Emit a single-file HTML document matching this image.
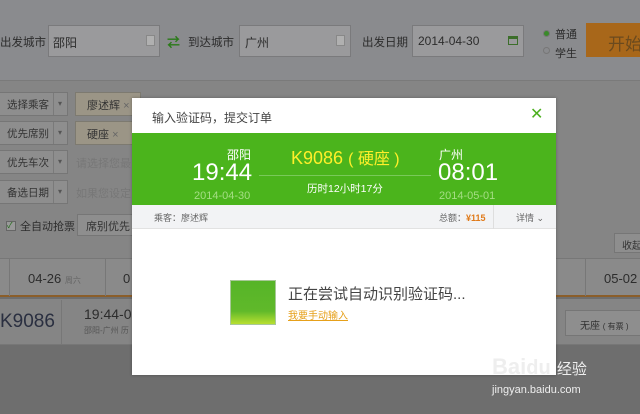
<!DOCTYPE html>
<html><head><meta charset="utf-8"><style>
*{margin:0;padding:0;box-sizing:border-box}
body{width:640px;height:414px;overflow:hidden;background:#6e6e6e;font-family:"Liberation Sans","Noto Sans CJK SC",sans-serif;position:relative;color:#333}
.a{position:absolute;white-space:nowrap}
.t{font-size:12px;color:#2c2c2c}
.inp{background:#9a9a9c;border:1px solid #7a7a7c;height:32px}
.btn{background:#8e8e8e;border:1px solid #767676;height:24px;color:#333;overflow:hidden}
.tag{background:#9b9586;border:1px solid #7d7a70;height:24px;color:#333}
.ar{position:absolute;left:54px;top:0;width:13px;height:22px;border-left:1px solid #7a7a7a;font-size:8px;line-height:22px;text-align:center;color:#555}
</style></head><body>
<div class="a" style="left:0;top:0;width:640px;height:80px;background:#8a8b8e"></div>
<div class="a" style="left:0;top:80px;width:640px;height:178px;background:#858585;border-top:1px solid #7a7a7a"></div>
<div class="a" style="left:0;top:258px;width:640px;height:39px;background:#8a8a8a;border-top:1px solid #777;border-bottom:2px solid #8b5e2a"></div>
<div class="a" style="left:0;top:299px;width:640px;height:46px;background:#858585;border-bottom:1px solid #777"></div>

<div class="a t" style="left:0;top:34px;font-size:11.5px">出发城市</div>
<div class="a inp" style="left:48px;top:25px;width:112px"><span class="a t" style="left:4px;top:8px;font-size:12px">邵阳</span><span class="a" style="left:97px;top:9px;width:9px;height:11px;background:#b0b0b0;border:1px solid #888"></span></div>
<div class="a" style="left:167px;top:32px;color:#2a7a18;font-size:13px;font-weight:bold">⇄</div>
<div class="a t" style="left:188px;top:34px;font-size:11.5px">到达城市</div>
<div class="a inp" style="left:239px;top:25px;width:112px"><span class="a t" style="left:5px;top:8px;font-size:12px">广州</span><span class="a" style="left:96px;top:9px;width:9px;height:11px;background:#b0b0b0;border:1px solid #888"></span></div>
<div class="a t" style="left:362px;top:34px;font-size:11.5px">出发日期</div>
<div class="a inp" style="left:412px;top:25px;width:112px"><span class="a t" style="left:5px;top:8px;font-size:12px">2014-04-30</span><span class="a" style="left:95px;top:10px;width:10px;height:9px;border:1px solid #3c6e2a;border-top-width:3px"></span></div>
<div class="a" style="left:543px;top:30px;width:7px;height:7px;border-radius:50%;border:1px solid #777;background:#3a8a2a"></div>
<div class="a t" style="left:555px;top:26px;font-size:11px">普通</div>
<div class="a" style="left:543px;top:47px;width:7px;height:7px;border-radius:50%;border:1px solid #777"></div>
<div class="a t" style="left:555px;top:45px;font-size:11px">学生</div>
<div class="a" style="left:586px;top:23px;width:54px;height:34px;background:#a8671a"><span class="a" style="left:22px;top:7px;font-size:17px;color:#6b4a1e">开始</span></div>

<div class="a btn" style="left:-2px;top:92px;width:70px"><span class="a" style="left:8px;top:4px;font-size:10.5px">选择乘客</span><span class="ar">▾</span></div>
<div class="a btn" style="left:-2px;top:121px;width:70px"><span class="a" style="left:8px;top:4px;font-size:10.5px">优先席别</span><span class="ar">▾</span></div>
<div class="a btn" style="left:-2px;top:150px;width:70px"><span class="a" style="left:8px;top:4px;font-size:10.5px">优先车次</span><span class="ar">▾</span></div>
<div class="a btn" style="left:-2px;top:180px;width:70px"><span class="a" style="left:8px;top:4px;font-size:10.5px">备选日期</span><span class="ar">▾</span></div>
<div class="a tag" style="left:75px;top:92px;width:66px"><span class="a" style="left:11px;top:4px;font-size:11px">廖述辉 <span style="color:#666">×</span></span></div>
<div class="a tag" style="left:75px;top:121px;width:66px"><span class="a" style="left:11px;top:4px;font-size:11px">硬座 <span style="color:#666">×</span></span></div>
<div class="a t" style="left:76px;top:155px;font-size:11px;color:#777">请选择您最</div>
<div class="a t" style="left:76px;top:185px;font-size:11px;color:#777">如果您设定</div>
<div class="a" style="left:6px;top:221px;width:10px;height:10px;border:1px solid #666;background:#999;font-size:8px;color:#1a6a10;line-height:8px">✓</div>
<div class="a t" style="left:20px;top:218px;font-size:11px">全自动抢票</div>
<div class="a btn" style="left:77px;top:214px;width:60px;height:22px"><span class="a" style="left:8px;top:3px;font-size:11px">席别优先</span></div>
<div class="a btn" style="left:614px;top:233px;width:30px;height:20px"><span class="a" style="left:7px;top:3px;font-size:10px">收起</span></div>

<div class="a" style="left:9px;top:259px;width:1px;height:37px;background:#777"></div>
<div class="a" style="left:105px;top:259px;width:1px;height:37px;background:#777"></div>
<div class="a" style="left:585px;top:259px;width:1px;height:37px;background:#777"></div>
<div class="a t" style="left:28px;top:271px;font-size:13px">04-26 <span style="font-size:8px;color:#666">周六</span></div>
<div class="a t" style="left:123px;top:271px;font-size:13px">0</div>
<div class="a t" style="left:604px;top:271px;font-size:13px">05-02</div>
<div class="a" style="left:61px;top:300px;width:1px;height:45px;background:#777"></div>
<div class="a t" style="left:0;top:311px;font-size:19px;color:#2a2f40">K9086</div>
<div class="a t" style="left:84px;top:306px;font-size:14px">19:44-0</div>
<div class="a t" style="left:84px;top:325px;font-size:8px;color:#555">邵阳-广州 历</div>
<div class="a btn" style="left:565px;top:310px;width:80px;height:26px"><span class="a" style="left:14px;top:6px;font-size:10px">无座 <span style="font-size:8px">( 有票 )</span></span></div>

<div class="a" style="left:132px;top:98px;width:424px;height:277px;background:#fff;box-shadow:0 0 3px rgba(0,0,0,.3)">
 <div class="a" style="left:20px;top:11px;font-size:12px;color:#444">输入验证码，提交订单</div>
 <div class="a" style="left:398px;top:6px;font-size:16px;color:#4cb01e">✕</div>
 <div class="a" style="left:0;top:35px;width:424px;height:72px;background:#4bb41c">
  <div class="a" style="left:95px;top:13px;font-size:12px;color:#fff">邵阳</div>
  <div class="a" style="left:60px;top:26px;font-size:24px;color:#fff;line-height:28px">19:44</div>
  <div class="a" style="left:62px;top:57px;font-size:11px;color:#a5de85">2014-04-30</div>
  <div class="a" style="left:159px;top:12px;font-size:18px;color:#ffef2a">K9086 <span style="font-size:16px">( 硬座 )</span></div>
  <div class="a" style="left:127px;top:42px;width:172px;height:1px;background:#79c95a"></div>
  <div class="a" style="left:175px;top:48px;font-size:10.5px;color:#fff">历时12小时17分</div>
  <div class="a" style="left:307px;top:13px;font-size:12px;color:#fff">广州</div>
  <div class="a" style="left:306px;top:26px;font-size:24px;color:#fff;line-height:28px">08:01</div>
  <div class="a" style="left:307px;top:57px;font-size:11px;color:#a5de85">2014-05-01</div>
 </div>
 <div class="a" style="left:0;top:107px;width:424px;height:24px;background:#f2f3f5;border-bottom:1px solid #e2e2e2">
  <div class="a" style="left:22px;top:6px;font-size:9px;color:#666">乘客：廖述辉</div>
  <div class="a" style="left:307px;top:6px;font-size:9px;color:#666">总额：<b style="color:#e07a1a">¥115</b></div>
  <div class="a" style="left:361px;top:0;width:1px;height:24px;background:#dedede"></div>
  <div class="a" style="left:384px;top:6px;font-size:9px;color:#666">详情 ⌄</div>
 </div>
 <div class="a" style="left:98px;top:182px;width:46px;height:45px;border:1px solid #a8c898;background:linear-gradient(#56b428,#60b92a 70%,#b8e030)"></div>
 <div class="a" style="left:156px;top:185px;font-size:15px;color:#444">正在尝试自动识别验证码...</div>
 <div class="a" style="left:156px;top:209px;font-size:10px;color:#e6a01a;text-decoration:underline">我要手动输入</div>
</div>
<div class="a" style="left:492px;top:354px;font-size:22px;color:#eee;font-weight:bold">Bai<span style="font-size:20px">du</span> <span style="font-size:15px;font-weight:normal">经验</span></div>
<div class="a" style="left:492px;top:384px;font-size:11px;color:#eee">jingyan.baidu.com</div>
</body></html>
